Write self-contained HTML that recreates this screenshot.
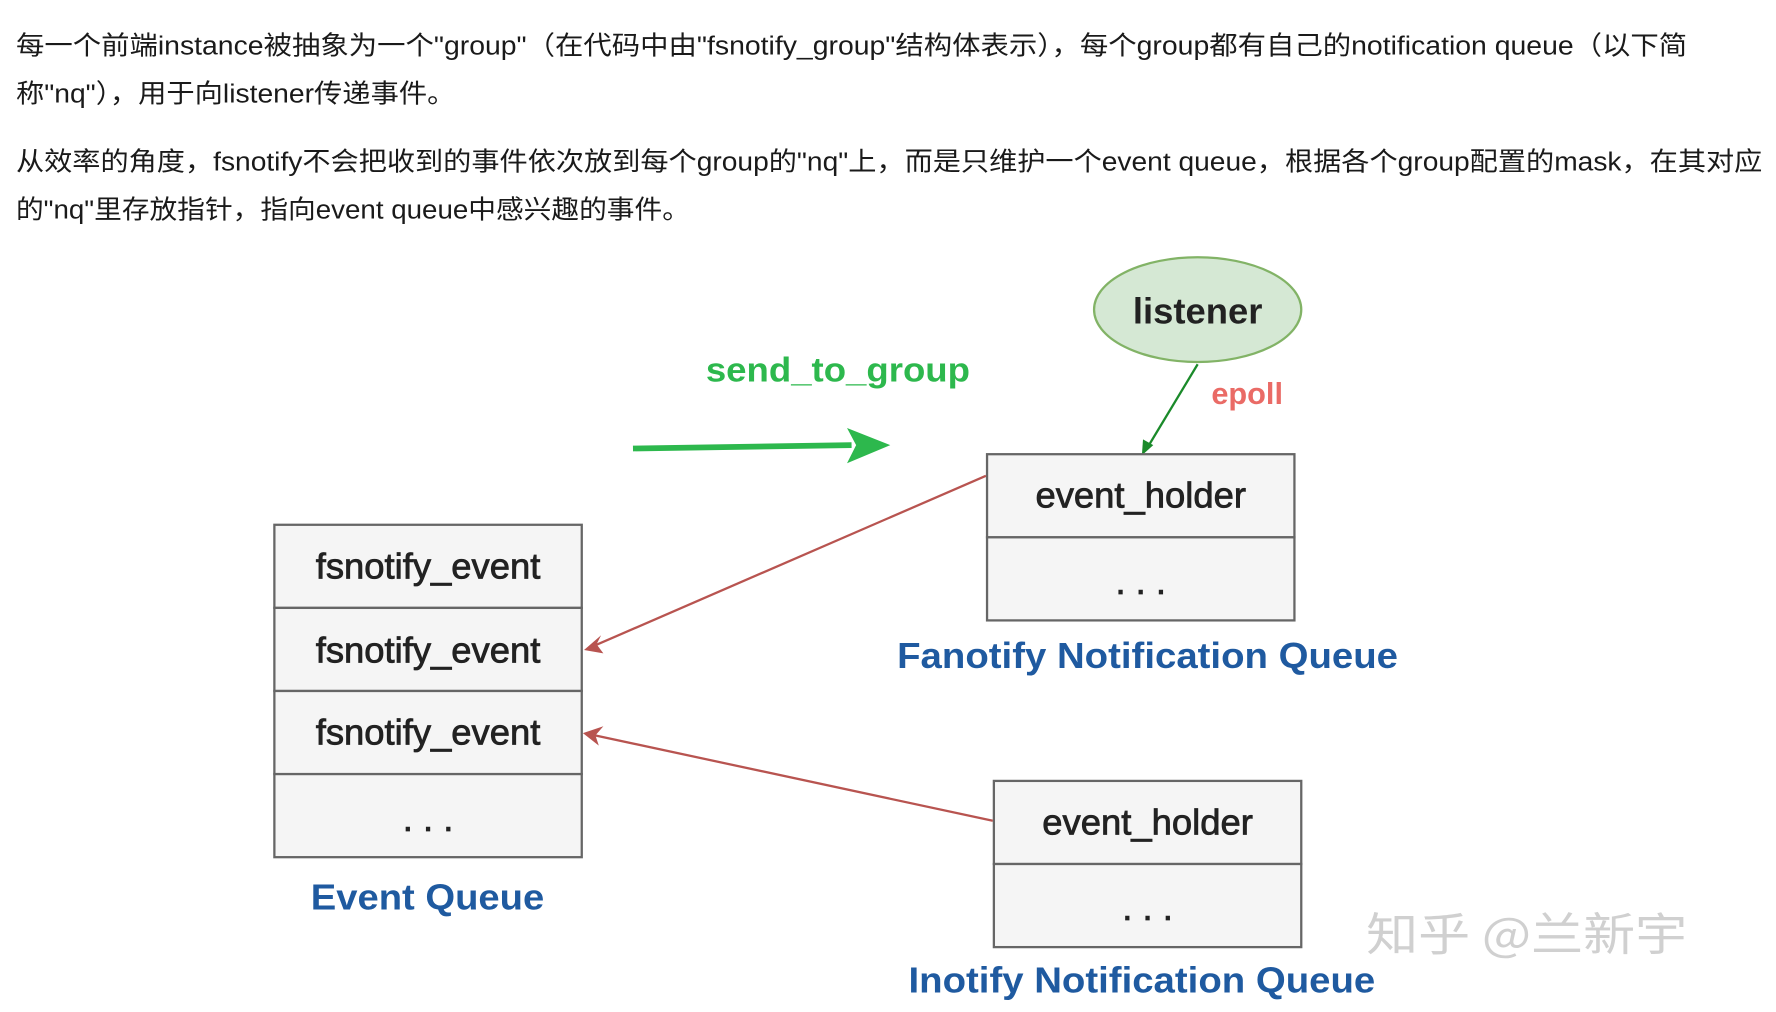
<!DOCTYPE html>
<html><head><meta charset="utf-8"><style>
html,body{margin:0;padding:0;background:#fff;width:1776px;height:1012px;overflow:hidden}
svg{display:block}
.p{font-family:"Liberation Sans","Noto Sans CJK SC",sans-serif;font-size:23px;fill:#1a1a1a}
.d{font-family:"Liberation Sans","DejaVu Sans",sans-serif;font-weight:bold}
</style></head><body>
<svg width="1776" height="1012" viewBox="0 0 1560 889" preserveAspectRatio="none" xmlns="http://www.w3.org/2000/svg">
<text class="p" x="14" y="48" textLength="1468" lengthAdjust="spacingAndGlyphs">每一个前端instance被抽象为一个"group"（在代码中由"fsnotify_group"结构体表示），每个group都有自己的notification queue（以下简</text>
<text class="p" x="14" y="90" textLength="386" lengthAdjust="spacingAndGlyphs">称"nq"），用于向listener传递事件。</text>
<text class="p" x="14" y="150" textLength="1534" lengthAdjust="spacingAndGlyphs">从效率的角度，fsnotify不会把收到的事件依次放到每个group的"nq"上，而是只维护一个event queue，根据各个group配置的mask，在其对应</text>
<text class="p" x="14" y="192" textLength="592" lengthAdjust="spacingAndGlyphs">的"nq"里存放指针，指向event queue中感兴趣的事件。</text>

<ellipse cx="1052" cy="272" rx="91" ry="46" fill="#d5e8d4" stroke="#82b366" stroke-width="2"/>
<text class="d" x="1052" y="284" font-size="32" text-anchor="middle" fill="#222">listener</text>
<text class="d" x="1064" y="355" font-size="27" fill="#ea6b66">epoll</text>
<line x1="1052" y1="320" x2="1008" y2="393" stroke="#1a8a2a" stroke-width="2"/>
<polygon points="1003,400 1004,386 1013,391" fill="#1a8a2a"/>

<text class="d" x="620" y="335" font-size="30" fill="#2db84d" textLength="232" lengthAdjust="spacingAndGlyphs">send_to_group</text>
<path d="M556,394 L748,391" stroke="#2db84d" stroke-width="5"/>
<polygon points="782,391 744,376 752,391 744,407" fill="#2db84d"/>

<g fill="#f5f5f5" stroke="#666" stroke-width="2">
<rect x="867" y="399" width="270" height="73"/><rect x="867" y="472" width="270" height="73"/>
<rect x="241" y="461" width="270" height="73"/><rect x="241" y="534" width="270" height="73"/>
<rect x="241" y="607" width="270" height="73"/><rect x="241" y="680" width="270" height="73"/>
<rect x="873" y="686" width="270" height="73"/><rect x="873" y="759" width="270" height="73"/>
</g>
<g class="d" font-size="32" fill="#222" stroke="#222" stroke-width="0.7" text-anchor="middle" style="font-weight:normal">
<text x="1002" y="446">event_holder</text><text x="1002" y="522">. . .</text>
<text x="376" y="508">fsnotify_event</text><text x="376" y="582">fsnotify_event</text>
<text x="376" y="654">fsnotify_event</text><text x="376" y="730">. . .</text>
<text x="1008" y="733">event_holder</text><text x="1008" y="808">. . .</text>
</g>
<g class="d" font-size="32" fill="#1f5aa0">
<text x="788" y="587" textLength="440" lengthAdjust="spacingAndGlyphs">Fanotify Notification Queue</text>
<text x="273" y="799" textLength="205" lengthAdjust="spacingAndGlyphs">Event Queue</text>
<text x="798" y="872" textLength="410" lengthAdjust="spacingAndGlyphs">Inotify Notification Queue</text>
</g>
<g stroke="#b85450" stroke-width="2" fill="none">
<line x1="866" y1="418" x2="518" y2="569"/>
<line x1="872" y1="721" x2="518" y2="645"/>
</g>
<polygon points="513,571 528,558 524,566 530,574" fill="#b85450"/>
<polygon points="512,644 530,638 523,646 526,655" fill="#b85450"/>
<text x="1200" y="835" font-family="'Noto Sans CJK SC',sans-serif" font-size="40" fill="#d0d0d0" textLength="282" lengthAdjust="spacingAndGlyphs">知乎 @兰新宇</text>
</svg>
</body></html>
